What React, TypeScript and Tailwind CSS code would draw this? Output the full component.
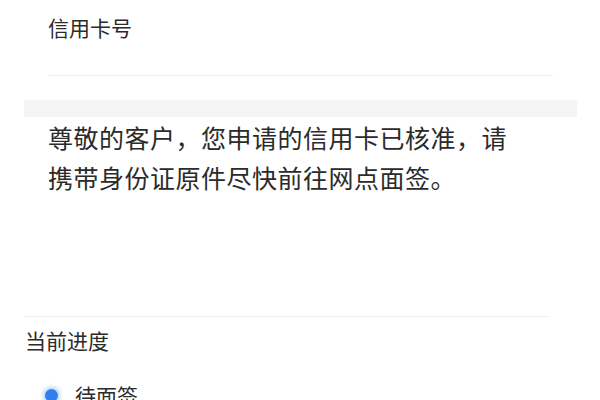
export default function App() {
  return (
    <div
      className="h-[400px] w-[600px] overflow-hidden bg-white text-[#2b2b2b]"
      style={{ fontFamily: '"Noto Sans CJK SC", "Noto Sans", sans-serif' }}
    >
      <div className="ml-[48px] mr-[47px] h-[76px] border-b border-[#efefef] pt-[13px]">
        <div className="text-[21px] leading-[28px]">信用卡号</div>
      </div>
      <div className="ml-[24px] mr-[23px] mt-[24px] h-[17px] bg-[#f5f5f5]" />
      <p className="pl-[48px] text-[25px] leading-[40px] tracking-[0.5px]">
        尊敬的客户，您申请的信用卡已核准，请
        <br />
        携带身份证原件尽快前往网点面签。
      </p>
      <div className="ml-[24px] mt-[119px] w-[526px] border-t border-[#efefef]" />
      <div className="pl-[25px] pt-[9px] text-[21px] leading-[28px]">当前进度</div>
      <div className="mt-[27px] flex items-center gap-[17px] pl-[45px]">
        <span className="h-[13px] w-[13px] rounded-full bg-[#2f80ed] shadow-[0_0_4px_2px_rgba(47,128,237,0.35)]" />
        <span className="text-[21px] leading-[28px]">待面签</span>
      </div>
    </div>
  );
}
